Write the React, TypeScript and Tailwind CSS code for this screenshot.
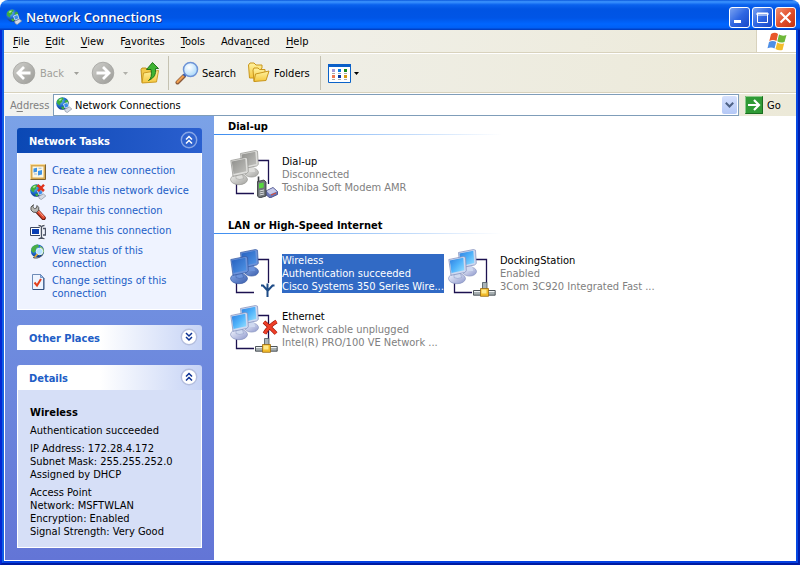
import type { ReactNode } from "react";

const uiFont = "font-['DejaVu_Sans_Condensed','DejaVu_Sans',sans-serif]";

function SharedGradients() {
  return (
    <svg className="absolute h-0 w-0" aria-hidden="true">
      <defs>
        <linearGradient id="screen" x1="0" y1="0" x2="1" y2="1">
          <stop offset="0" stopColor="#2f7fe0" />
          <stop offset="0.5" stopColor="#4fb2fa" />
          <stop offset="1" stopColor="#9be2ff" />
        </linearGradient>
        <linearGradient id="screenSelected" x1="0" y1="0" x2="1" y2="1">
          <stop offset="0" stopColor="#2560bf" />
          <stop offset="1" stopColor="#5296e6" />
        </linearGradient>
        <linearGradient id="screenOff" x1="0" y1="0" x2="1" y2="1">
          <stop offset="0" stopColor="#8f8f8c" />
          <stop offset="1" stopColor="#c0c0bc" />
        </linearGradient>
        <linearGradient id="standFill" x1="0" y1="0" x2="1" y2="1">
          <stop offset="0" stopColor="#f4f7ff" />
          <stop offset="1" stopColor="#8e98cc" />
        </linearGradient>
        <linearGradient id="standSelected" x1="0" y1="0" x2="1" y2="1">
          <stop offset="0" stopColor="#86a9e6" />
          <stop offset="1" stopColor="#3c5fae" />
        </linearGradient>
        <linearGradient id="standOff" x1="0" y1="0" x2="1" y2="1">
          <stop offset="0" stopColor="#f0f0ee" />
          <stop offset="1" stopColor="#a2a29e" />
        </linearGradient>
        <radialGradient id="globeFill" cx="0.35" cy="0.3" r="0.75">
          <stop offset="0" stopColor="#7fc4ff" />
          <stop offset="0.5" stopColor="#1f6fd0" />
          <stop offset="1" stopColor="#0b2f80" />
        </radialGradient>
        <linearGradient id="greyDisc" x1="0" y1="0" x2="1" y2="1">
          <stop offset="0" stopColor="#cfcfcb" />
          <stop offset="1" stopColor="#9b9b97" />
        </linearGradient>
        <linearGradient id="folderFill" x1="0" y1="0" x2="0" y2="1">
          <stop offset="0" stopColor="#fff3a0" />
          <stop offset="1" stopColor="#f5c63c" />
        </linearGradient>
        <radialGradient id="lensFill" cx="0.4" cy="0.35" r="0.7">
          <stop offset="0" stopColor="#ffffff" />
          <stop offset="1" stopColor="#a4d6fa" />
        </radialGradient>
      </defs>
    </svg>
  );
}

function GlobeIcon({ cut = false }: { cut?: boolean }) {
  return (
    <svg viewBox="0 0 16 16" className="h-4 w-4 shrink-0" aria-hidden="true">
      <circle cx="6.500" cy="6.500" r="6.300" fill="url(#globeFill)" />
      <path d="M1 3.500Q3 .600 6.500.500L8 2 6 3.500 6.500 5 4.500 6 4 8.500 1.500 7Q.2 5 1 3.500ZM8.500 4l2.500-1.500Q13 5 12.500 7.500L10 8ZM5 10l2.500-.5 1 2-2 1Z" fill="#3fae3c" />
      <path d="M2.500 3 5 1.500 6 2 4 4Z" fill="#b6f0a0" />
      <path d="m7.500 7 4-1.500 1.500 4-4 1.700Z" fill="#3b8de8" stroke="#e8eef8" strokeWidth=".8" />
      <path d="m8.500 12.500 5-2.500 2.300 2-4.500 3.500q-2.500-.5-2.800-3Z" fill="#d5dbe6" stroke="#7e8794" strokeWidth=".6" />
      {cut && <path d="m7.500 1 6.500 6m0-6.200-6 6.500" stroke="#e0321c" strokeWidth="2.400" fill="none" />}
    </svg>
  );
}

function WizardIcon() {
  return (
    <svg viewBox="0 0 16 16" className="h-4 w-4" aria-hidden="true">
      <path d="M.500.500h15v15H.500Z" fill="#d9a94e" />
      <path d="M.500 15.500V.500h15" fill="none" stroke="#f7dca0" />
      <path d="M.500 15.500h15V.500" fill="none" stroke="#7a6236" />
      <path d="M2.500 2.500h11v11h-11Z" fill="#fbf7e6" />
      <path d="m3.500 4.500 3.500-.8v4l-3.500.8ZM8 7l4-1v4.500L8 11.500Z" fill="#3f93e6" />
      <path d="M4 9.500h3v1H4ZM8.500 3.800h3v1h-3Z" fill="#9bb7d6" />
    </svg>
  );
}

function WrenchIcon() {
  return (
    <svg viewBox="0 0 16 16" className="h-4 w-4" aria-hidden="true">
      <path d="m7 7 6.500 7" stroke="#6b1a10" strokeWidth="4.600" strokeLinecap="round" />
      <path d="m7.500 7 6 6.500" stroke="#e24a30" strokeWidth="3" strokeLinecap="round" />
      <path d="m8.500 7 5 5.500" stroke="#ffb09c" strokeWidth=".9" />
      <path d="M3.500.700 2.800 3l1.700 1.600L6.500 4 7 1.500Q9.500 3 8.800 6L6.500 8.500Q2.500 9 1 6-.2 2.500 3.500.700Z" fill="#b9b9b6" stroke="#4e4e4c" strokeWidth=".9" />
    </svg>
  );
}

function RenameIcon() {
  return (
    <svg viewBox="0 0 16 16" className="h-4 w-4" aria-hidden="true">
      <path d="M.500 3.500h10v8H.500Z" fill="#fff" stroke="#3c4660" />
      <path d="M2 5h7v5H2Z" fill="#0a3fb5" />
      <path d="M8.500 1.500q2.500 0 3 1.500.5-1.500 3-1.500M11.500 3v10M8.500 14.700q2.500 0 3-1.700.5 1.700 3 1.700" fill="none" stroke="#fff" strokeWidth="2.800" />
      <path d="M8.500 1.500q2.500 0 3 1.500.5-1.500 3-1.500M11.500 3v10M8.500 14.700q2.500 0 3-1.700.5 1.700 3 1.700M13 4.500h2.500v6.500H13" fill="none" stroke="#4c5365" strokeWidth="1.300" />
    </svg>
  );
}

function StatusIcon() {
  return (
    <svg viewBox="0 0 16 16" className="h-4 w-4" aria-hidden="true">
      <circle cx="7.500" cy="7" r="6.600" fill="url(#globeFill)" />
      <path d="M1.500 4Q4 .500 8 .500L9 3 6.500 4 5.500 7.500 3.500 9 1.200 7Z" fill="#4bae45" />
      <path d="M10 2q4 1.500 4 5.500l-2 4-2-2Z" fill="#8cc56f" />
      <circle cx="9.500" cy="7.500" r="3.200" fill="#b4e2ff" stroke="#eaf4fb" />
      <path d="m7.500 10-3.500 4" stroke="#e0a838" strokeWidth="1.800" />
      <path d="M3 13.500q5 2 9.500-2.500" stroke="#555e6c" fill="none" />
    </svg>
  );
}

function SettingsIcon() {
  return (
    <svg viewBox="0 0 16 16" className="h-4 w-4" aria-hidden="true">
      <path d="M2.500.500h8l3 3v12h-11Z" fill="#eef4ff" stroke="#6d8bb8" />
      <path d="M14 4v11.500H3" fill="none" stroke="#34507e" />
      <path d="M10.500.500v3h3Z" fill="#9dc0ee" stroke="#5478b0" strokeWidth=".7" />
      <path d="m4.500 8.500 2.500 3 4-6.500" fill="none" stroke="#e2401c" strokeWidth="2" />
    </svg>
  );
}

type Badge = "phone" | "antenna" | "cable" | "unplugged";

function ConnectionIcon({ badge }: { badge: Badge }) {
  const off = badge === "phone";
  const selected = badge === "antenna";
  const screen = off ? "url(#screenOff)" : selected ? "url(#screenSelected)" : "url(#screen)";
  const shell = off ? "#dededb" : selected ? "#6c93da" : "#cfd9f0";
  const edge = off ? "#8e8e8a" : selected ? "#31549e" : "#7c8ab8";
  const stand = off ? "url(#standOff)" : selected ? "url(#standSelected)" : "url(#standFill)";
  return (
    <svg viewBox="0 0 48 48" className="h-12 w-12 shrink-0" aria-hidden="true">
      <path d="M27 10.500h11.500V34M6.500 33v10.500H24" fill="none" stroke="#1c1250" strokeWidth="1.300" />
      <ellipse cx="21.500" cy="22.500" rx="7" ry="4.600" fill={stand} stroke={edge} strokeWidth=".6" />
      <path d="M18 16h6l1 6h-7Z" fill={shell} />
      <path d="m10.500 3.500 15-3 2 .7.800 13.300-1.800 1.500-14.500 3Z" fill={shell} stroke={edge} strokeWidth=".7" />
      <path d="m11.500 4.500 13.800-2.800 1 12.300-13.300 3Z" fill={screen} />
      <ellipse cx="9" cy="29.500" rx="8.500" ry="5.200" fill={stand} stroke={edge} strokeWidth=".6" />
      <path d="M6 23h6l1.500 5.500q-4 2-7.500 0Z" fill={shell} stroke={edge} strokeWidth=".4" />
      <path d="m.8 10.500 14.700-3 2 .8.800 13.500-1.500 1.700L3 26.300Z" fill={shell} stroke={edge} strokeWidth=".7" />
      <path d="m1.800 11.500 13.500-2.800 1 12.500L3.500 24Z" fill={screen} />
      {badge === "antenna" && (
        <path d="M37.500 34.500v13.500M31 36.500h2l4.500 5h.5l4.500-5h2" fill="none" stroke="#1d4b86" strokeWidth="2" />
      )}
      {(badge === "cable" || badge === "unplugged") && (
        <g>
          <path d="M34.500 33.500h4.500v7h-4.500Z" fill="#a9b4b9" stroke="#49545c" strokeWidth=".8" />
          <path d="M25.500 41.500h21.700v4.700H25.500Z" fill="#a7afb1" stroke="#3e464c" strokeWidth=".9" />
          <path d="M26 42.500h20.500" stroke="#f0f3f4" />
          <path d="M32.500 39.500h8v7.800h-8Z" fill="#f2bb2b" stroke="#99690f" strokeWidth=".8" />
          <path d="M33.500 40.500h5v4h-5Z" fill="#ffe98a" />
        </g>
      )}
      {badge === "unplugged" && (
        <g fill="none">
          <path d="M34 17q6 5 12 11.500M46.500 16.500Q39 21 34.500 28.500" stroke="#8f1206" strokeWidth="4" />
          <path d="M34 17q6 5 12 11.500M46.500 16.500Q39 21 34.500 28.500" stroke="#ee3f28" strokeWidth="2.800" />
        </g>
      )}
      {badge === "phone" && (
        <g>
          <path d="m36 41 7-3.500 4.500 4v3L40 48l-5-4Z" fill="#6b76b6" stroke="#3b3f7c" strokeWidth=".8" />
          <path d="m36.500 41 6.500-3 4 3.500-7 3Z" fill="#c6cbea" />
          <path d="m41 45 5-2" stroke="#e24a30" />
          <path d="M28.500 26.500v6" stroke="#3c3f44" strokeWidth="1.600" />
          <path d="m27.500 31.500 6.500-1.500 2 2v14l-6.500 2-2-2Z" fill="#6f7478" stroke="#2f3336" strokeWidth=".8" />
          <path d="m29 33.500 4.700-1v5l-4.700 1Z" fill="#58d83e" />
          <path d="m29.500 41 4.500-1m-4.500 3 4.500-1m-4.500 3 4.500-1" stroke="#d9dcde" />
        </g>
      )}
    </svg>
  );
}

function NavDisc({ forward = false }: { forward?: boolean }) {
  return (
    <svg viewBox="0 0 24 24" className="h-6 w-6" aria-hidden="true">
      <circle cx="12" cy="12" r="10.800" fill="url(#greyDisc)" stroke="#a3a39f" strokeWidth=".8" />
      <path
        d={forward ? "M5.500 12h12M12 6l6 6-6 6" : "M18.500 12h-12M12 6l-6 6 6 6"}
        fill="none"
        stroke="#fff"
        strokeWidth="2.800"
      />
    </svg>
  );
}

function Caret({ className }: { className: string }) {
  return (
    <svg viewBox="0 0 5 3" className={className} aria-hidden="true">
      <path d="M0 0h5L2.500 3Z" fill="currentColor" />
    </svg>
  );
}

function UpFolderIcon() {
  return (
    <svg viewBox="0 0 20 24" className="h-6 w-5" aria-hidden="true">
      <path d="M1 8.500 2 7h4l1.500 1.500h5V20L2 21.500Z" fill="#f2c94c" stroke="#b98a14" strokeWidth=".9" />
      <path d="m3.500 12 15-2.500L16.500 21 2 22Z" fill="url(#folderFill)" stroke="#c7951b" strokeWidth=".9" />
      <path d="M8.500 19.500q4-2.500 2.500-11H6.500L12.500 1.500 18.500 7.500H15.500Q17 16 8.500 19.500Z" fill="#3fb433" stroke="#176c12" strokeWidth=".9" />
    </svg>
  );
}

function SearchIcon() {
  return (
    <svg viewBox="0 0 24 24" className="h-6 w-6" aria-hidden="true">
      <path d="m9 15-6.500 6.500" stroke="#8a5a3a" strokeWidth="4" strokeLinecap="round" />
      <path d="m8.500 15-6 6" stroke="#f0a050" strokeWidth="2.200" strokeLinecap="round" />
      <path d="m11 12.500-2 2.500" stroke="#3a5fb0" strokeWidth="3.500" />
      <circle cx="15.500" cy="8.500" r="7" fill="url(#lensFill)" stroke="#6d93d6" strokeWidth="1.500" />
    </svg>
  );
}

function FoldersIcon() {
  return (
    <svg viewBox="0 0 24 24" className="h-6 w-6" aria-hidden="true">
      <path d="M1.500 4 3 2h4l2 2h6v3l-8 10H2.500Z" fill="url(#folderFill)" stroke="#c9961c" />
      <path d="M6 9 7 7h4l1.500 1.500H18V12L9 20l-2 .500Z" fill="url(#folderFill)" stroke="#c9961c" />
      <path d="m8.500 13 13.500-3-3 9.500-12 1Z" fill="url(#folderFill)" stroke="#c9961c" />
    </svg>
  );
}

function ViewsIcon() {
  return (
    <svg viewBox="0 0 23 19" className="h-[19px] w-[23px]" aria-hidden="true">
      <path d="M.500.500h22v18H.500Z" fill="#fff" stroke="#0a63c9" />
      <path d="M0 0h23v3H0Z" fill="#0a5fc8" />
      <path d="M4 5h3v3H4Z" fill="#a59bd8" />
      <path d="M10 5h3v3h-3Z" fill="#0a7be0" />
      <path d="M16 5h3v3h-3Z" fill="#178a1d" />
      <path d="M4 11h3v3H4Z" fill="#f07850" />
      <path d="M10 11h3v3h-3Z" fill="#0b3aa0" />
      <path d="M16 11h3v3h-3Z" fill="#d59a10" />
      <path d="M4 9.500h3m3 0h3m3 0h3M4 15.500h3m3 0h3m3 0h3" stroke="#a9a9a9" />
    </svg>
  );
}

function WindowsFlag() {
  return (
    <svg viewBox="0 0 20 19" className="h-[19px] w-5" aria-hidden="true">
      <path d="M4 2q4-2.500 7 0L9.500 9Q6 7 2.300 9Z" fill="#e8562a" />
      <path d="M12 2.500q3.500 2 7.500.5L17.500 10q-4 1.500-7.200-.7Z" fill="#6fb83a" />
      <path d="M2 10q3.800-2 7.200 0L7.500 16.500q-3-2-7-.3Z" fill="#4f8fe6" />
      <path d="M10.200 10.500q3.300 2 7 .7L15.500 18q-4 1-7-1Z" fill="#f3bd2d" />
    </svg>
  );
}

function Chevrons({ down = false, dark = false }: { down?: boolean; dark?: boolean }) {
  return (
    <svg viewBox="0 0 18 18" className="h-[18px] w-[18px]" aria-hidden="true">
      <circle
        cx="9"
        cy="9"
        r="7.700"
        fill={dark ? "#2f63cf" : "#fff"}
        stroke={dark ? "#86a5e6" : "#b4bede"}
        strokeWidth="1.400"
      />
      <path
        d={down ? "m6 5 3 3 3-3M6 9l3 3 3-3" : "m6 8.500 3-3 3 3M6 12.500l3-3 3 3"}
        fill="none"
        stroke={dark ? "#fff" : "#0c3293"}
        strokeWidth="1.500"
      />
    </svg>
  );
}

function CaptionButton({ label, red = false, children }: { label: string; red?: boolean; children: ReactNode }) {
  return (
    <button
      type="button"
      aria-label={label}
      className={`h-[21px] w-[21px] rounded-[3px] border border-white bg-gradient-to-br ${
        red ? "from-[#f0906f] via-[#e2502c] to-[#c23410]" : "from-[#7ba2f0] via-[#2f66e2] to-[#1747c8]"
      }`}
    >
      <svg viewBox="0 0 19 19" className="h-[19px] w-[19px]" aria-hidden="true">
        {children}
      </svg>
    </button>
  );
}

const menus: [string, string, string][] = [
  ["", "F", "ile"],
  ["", "E", "dit"],
  ["", "V", "iew"],
  ["F", "a", "vorites"],
  ["", "T", "ools"],
  ["Adva", "n", "ced"],
  ["", "H", "elp"],
];

const tasks: { icon: ReactNode; text: string }[] = [
  { icon: <WizardIcon />, text: "Create a new connection" },
  { icon: <GlobeIcon cut />, text: "Disable this network device" },
  { icon: <WrenchIcon />, text: "Repair this connection" },
  { icon: <RenameIcon />, text: "Rename this connection" },
  { icon: <StatusIcon />, text: "View status of this connection" },
  { icon: <SettingsIcon />, text: "Change settings of this connection" },
];

function PanelHeader({ title, open, dark = false }: { title: string; open: boolean; dark?: boolean }) {
  return (
    <h2
      className={`flex h-[25px] items-start justify-between rounded-t-[3px] pl-3 pr-1 pt-[3px] ${
        dark
          ? "bg-gradient-to-r from-[#0a48b4] to-[#2a5fcf] text-white"
          : "bg-gradient-to-r from-white from-45% to-[#c6d3f5] text-[#215dc6]"
      }`}
    >
      <span className="pt-1 font-bold">{title}</span>
      <button type="button" aria-expanded={open} aria-label={`Toggle ${title}`}>
        <Chevrons down={!open} dark={dark} />
      </button>
    </h2>
  );
}

function GroupHeading({ children }: { children: ReactNode }) {
  return (
    <h2 className="flex h-[19px] flex-col justify-between">
      <span className="pl-3.5 pt-1 font-bold">{children}</span>
      <span className="h-px w-72 bg-[linear-gradient(to_right,#3b8cf0,#ffffff)]" />
    </h2>
  );
}

function Connection({ badge, lines }: { badge: Badge; lines: [string, string, string] }) {
  const selected = badge === "antenna";
  return (
    <li className="flex h-12 gap-1">
      <ConnectionIcon badge={badge} />
      <div className="pt-[5px]">
        <div className={`w-max whitespace-nowrap ${selected ? "bg-[#316ac5] text-white" : "text-[#808080]"}`}>
          <p className={selected ? "" : "text-black"}>{lines[0]}</p>
          <p>{lines[1]}</p>
          <p>{lines[2]}</p>
        </div>
      </div>
    </li>
  );
}

const listClass = "grid grid-cols-[repeat(auto-fill,210px)] gap-2 pl-4";

export default function App() {
  return (
    <div
      className={`flex min-h-screen flex-col overflow-hidden rounded-t-lg text-[11px] leading-[13px] text-black ${uiFont}`}
    >
      <SharedGradients />
      <header className="flex h-[30px] items-center bg-[linear-gradient(to_bottom,#0a58dc_0%,#3d95ff_6%,#0a62ee_16%,#0054e3_30%,#0055e6_60%,#0066ff_80%,#0060f6_92%,#0038b8_100%)] pl-1.5 pr-1 pt-1">
        <GlobeIcon />
        <h1 className="grow pl-1 font-['Open_Sans',sans-serif] text-[13px] font-semibold leading-4 text-white [text-shadow:1px_1px_#0a2f90]">
          Network Connections
        </h1>
        <div className="flex gap-0.5">
          <CaptionButton label="Minimize">
            <path d="M4 12h7v3H4Z" fill="#fff" />
          </CaptionButton>
          <CaptionButton label="Maximize">
            <path d="M4.500 5.500h10v9h-10ZM4 5h11v2H4Z" fill="none" stroke="#fff" />
          </CaptionButton>
          <CaptionButton label="Close" red>
            <path d="m4.500 4.500 10 10m0-10-10 10" stroke="#fff" strokeWidth="2.200" />
          </CaptionButton>
        </div>
      </header>

      <div className="flex grow border-x-2 border-b-2 border-b-[#001aa0] border-l-[#0427d4] border-r-[#001fae]">
        <div className="flex grow flex-col border-x-2 border-b-2 border-b-[#0540e0] border-l-[#0f5fe6] border-r-[#0648e2]">
          <div className="flex h-[23px] border-b border-[#d8d2bd] bg-gradient-to-r from-[#f3f4f2] to-[#ece9d8]">
            <nav className="flex grow items-center pl-px" aria-label="Menu bar">
              {menus.map(([before, key, after]) => (
                <button type="button" key={key + after} className="px-2 py-1">
                  {before}
                  <span className="underline underline-offset-2">{key}</span>
                  {after}
                </button>
              ))}
            </nav>
            <div className="flex w-10 items-center justify-center border-l border-[#d8d2bd] bg-white">
              <WindowsFlag />
            </div>
          </div>

          <div
            role="toolbar"
            aria-label="Standard buttons"
            className="flex h-10 items-center border-b border-t border-b-[#d8d2bd] border-t-white bg-gradient-to-r from-[#f1f2ef] to-[#ece9d8]"
          >
            <button type="button" disabled className="flex items-center gap-1 pl-2 text-[#a0a09a]">
              <NavDisc />
              Back
              <Caret className="ml-1.5 h-[3px] w-[5px]" />
            </button>
            <button type="button" disabled className="flex items-center gap-2 pl-3 text-[#b0b0aa]">
              <NavDisc forward />
              <Caret className="h-[3px] w-[5px]" />
            </button>
            <button type="button" aria-label="Up" className="pl-3 pr-2">
              <UpFolderIcon />
            </button>
            <span className="h-[34px] w-px bg-[#c5c2b2]" />
            <button type="button" className="flex items-center gap-[3px] pl-1.5">
              <SearchIcon />
              Search
            </button>
            <button type="button" className="flex items-center gap-[3px] pl-[11px]">
              <FoldersIcon />
              Folders
            </button>
            <span className="ml-2.5 h-[34px] w-px bg-[#c5c2b2]" />
            <button type="button" aria-label="Views" className="flex items-center gap-[3px] pl-[7px]">
              <ViewsIcon />
              <Caret className="h-[3px] w-[5px]" />
            </button>
          </div>

          <div className="flex h-[23px] items-center border-t border-white bg-gradient-to-r from-[#f1f2ef] to-[#ece9d8]">
            <label htmlFor="address" className="w-[49px] pl-1.5 text-[#808080]">
              A<span className="underline underline-offset-2">d</span>dress
            </label>
            <div className="flex h-[22px] grow items-center border border-[#7f9db9] bg-white pl-0.5">
              <GlobeIcon />
              <input
                id="address"
                type="text"
                defaultValue="Network Connections"
                className="w-0 grow bg-transparent pl-[3px] outline-none"
              />
              <button
                type="button"
                aria-label="Show addresses"
                className="mr-px flex h-[18px] w-[15px] items-center justify-center rounded-[2px] bg-gradient-to-b from-[#d6e1fd] to-[#b4c8f6]"
              >
                <svg viewBox="0 0 9 6" className="h-1.5 w-[9px]" aria-hidden="true">
                  <path d="m.8.800 3.700 3.700L8.200.800" fill="none" stroke="#4d6185" strokeWidth="2" />
                </svg>
              </button>
            </div>
            <button type="button" className="flex w-[57px] items-center gap-1 pl-1.5">
              <svg viewBox="0 0 18 18" className="h-[18px] w-[18px]" aria-hidden="true">
                <path d="M0 0h18v18H0Z" fill="#2f9a35" />
                <path d="M.500 17.500V.500h17" fill="none" stroke="#8ccb8b" />
                <path d="M.500 17.500h17V.500" fill="none" stroke="#196d1f" />
                <path d="M3 9h11M9 4l5 5-5 5" fill="none" stroke="#fff" strokeWidth="2.200" />
              </svg>
              Go
            </button>
          </div>

          <div className="flex grow border-b border-l border-white bg-white">
            <aside className="flex w-[209px] shrink-0 flex-col gap-[15px] bg-gradient-to-b from-[#7ba2e7] to-[#6375d6] p-3">
              <section>
                <PanelHeader title="Network Tasks" open dark />
                <ul className="flex flex-col gap-1 border border-t-0 border-white bg-[#eff3ff] pb-[9px] pl-3 pr-2 pt-[11px]">
                  {tasks.map((task) => (
                    <li key={task.text} className="min-h-4">
                      <a href="#" className="flex gap-1.5 text-[#215dc6]">
                        <span className="h-4 w-4 shrink-0">{task.icon}</span>
                        {task.text}
                      </a>
                    </li>
                  ))}
                </ul>
              </section>
              <section>
                <PanelHeader title="Other Places" open={false} />
              </section>
              <section>
                <PanelHeader title="Details" open />
                <div className="flex flex-col gap-[5px] border border-t-0 border-white bg-[#d6dff7] pb-[9px] pl-3 pt-4">
                  <h3 className="font-bold">Wireless</h3>
                  <p>Authentication succeeded</p>
                  <div>
                    <p>IP Address: 172.28.4.172</p>
                    <p>Subnet Mask: 255.255.252.0</p>
                    <p>Assigned by DHCP</p>
                  </div>
                  <div>
                    <p>Access Point</p>
                    <p>Network: MSFTWLAN</p>
                    <p>Encryption: Enabled</p>
                    <p>Signal Strength: Very Good</p>
                  </div>
                </div>
              </section>
            </aside>

            <main className="grow">
              <GroupHeading>Dial-up</GroupHeading>
              <ul className={`${listClass} pb-[17px] pt-[15px]`}>
                <Connection badge="phone" lines={["Dial-up", "Disconnected", "Toshiba Soft Modem AMR"]} />
              </ul>
              <GroupHeading>LAN or High-Speed Internet</GroupHeading>
              <ul className={`${listClass} pt-[15px]`}>
                <Connection
                  badge="antenna"
                  lines={["Wireless", "Authentication succeeded", "Cisco Systems 350 Series Wire..."]}
                />
                <Connection badge="cable" lines={["DockingStation", "Enabled", "3Com 3C920 Integrated Fast ..."]} />
                <Connection
                  badge="unplugged"
                  lines={["Ethernet", "Network cable unplugged", "Intel(R) PRO/100 VE Network ..."]}
                />
              </ul>
            </main>
          </div>
        </div>
      </div>
    </div>
  );
}
